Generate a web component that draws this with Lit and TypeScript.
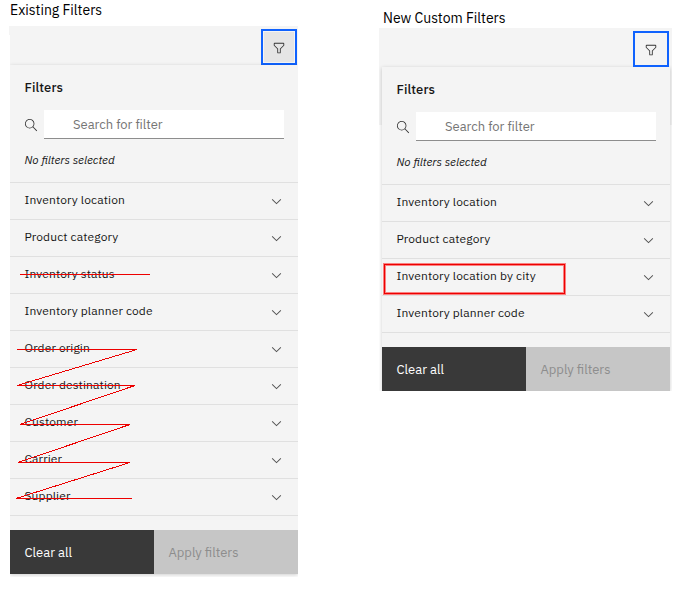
import { LitElement, html, svg, css, nothing } from "lit";
import { customElement, property } from "lit/decorators.js";

const funnel = html`<svg class="funnel" width="16" height="16" viewBox="0 0 32 32" fill="currentColor">
  <path d="M18 28h-4a2 2 0 0 1-2-2v-7.59L4.59 11A2 2 0 0 1 4 9.590V6a2 2 0 0 1 2-2h20a2 2 0 0 1 2 2v3.590a2 2 0 0 1-.590 1.410L20 18.410V26a2 2 0 0 1-2 2ZM6 6v3.590l8 8V26h4v-8.410l8-8V6Z" />
</svg>`;
const lens = html`<svg class="lens" width="16" height="16" viewBox="0 0 16 16" fill="currentColor">
  <path d="M15 14.300 10.700 10c1.900-2.300 1.600-5.800-.7-7.700S4.200.7 2.300 3 .7 8.800 3 10.700c2 1.700 5 1.700 7 0l4.300 4.300.7-.7zM2 6.500C2 4 4 2 6.500 2S11 4 11 6.500 9 11 6.500 11 2 9 2 6.500z" />
</svg>`;
const chevron = html`<svg class="chevron" width="16" height="16" viewBox="0 0 16 16" fill="currentColor">
  <path d="M8 11 3 6l.7-.7L8 9.600l4.300-4.300.7.7z" />
</svg>`;

interface Row { label: string; marked?: boolean; }

@customElement("filter-panel")
export class FilterPanel extends LitElement {
  @property({ attribute: false }) rows: Row[] = [];

  static styles = css`
    :host { display: block; width: 288px; background: #f4f4f4; color: #161616; font-family: "IBM Plex Sans", Roboto, sans-serif; }
    .title { height: 45px; padding: 0 14.500px; box-sizing: border-box; font-size: 13px; font-weight: 500; line-height: 45px; letter-spacing: 0.100px; }
    .search { display: flex; align-items: center; height: 29px; padding: 0 14px 0 13.500px; }
    .lens { flex: none; width: 14px; height: 14px; margin-right: 6.500px; color: #333; }
    .field { flex: 1; height: 29px; box-sizing: border-box; padding-left: 29px; border-bottom: 1px solid #8d8d8d; background: #fff; color: #757575; font-size: 13px; line-height: 29px; letter-spacing: -0.020px; }
    .empty { height: 43px; padding-left: 14.500px; font-size: 11.500px; font-style: italic; line-height: 41px; }
    .row { position: relative; display: flex; align-items: center; justify-content: space-between; height: 36px; padding: 0 14px 0 14.500px; border-top: 1px solid #e0e0e0; font-size: 12px; letter-spacing: 0.130px; }
    .row span { padding-bottom: 4px; }
    .chevron { width: 15px; height: 15px; color: #525252; }
    .end { height: 14px; border-top: 1px solid #e0e0e0; }
    .actions { display: grid; grid-template-columns: 1fr 1fr; height: 44px; font-size: 13px; line-height: 45px; }
    .actions div { height: 44px; padding-left: 14.500px; overflow: hidden; }
    .clear { background: #393939; color: #fff; }
    .apply { background: #c6c6c6; color: #8d8d8d; }
    .mark { position: absolute; left: 1px; top: 4px; box-sizing: border-box; width: 183px; height: 32px; border: 1px solid #f98080; box-shadow: inset 0 0 0 1px #ed0000, inset 0 0 0 2px #f98080; }
  `;

  render() {
    return html`
      <div class="title">Filters</div>
      <div class="search">${lens}<div class="field">Search for filter</div></div>
      <div class="empty">No filters selected</div>
      ${this.rows.map((r) => html`<div class="row"><span>${r.label}</span>${chevron}${r.marked ? html`<i class="mark"></i>` : nothing}</div>`)}
      <div class="end"></div>
      <div class="actions"><div class="clear">Clear all</div><div class="apply">Apply filters</div></div>
    `;
  }
}

const strokes = [
  "20,274 150,274",
  "17,349 137,349 17,385 135,385 20,424 130,424 18,462 130,462 16,498 132,498",
];

@customElement("app-root")
export class AppRoot extends LitElement {
  static styles = css`
    :host { display: flex; position: relative; height: 590px; overflow: hidden; background: #fff; color: #000; font-family: "IBM Plex Sans", Roboto, sans-serif; }
    .before { width: 289px; margin-left: 9px; }
    .after { width: 293px; margin-left: 81px; }
    .heading { height: 26px; box-sizing: border-box; padding-left: 1px; font-size: 14px; line-height: 20px; white-space: nowrap; }
    .after .heading { height: 28px; padding-left: 4px; line-height: 36px; letter-spacing: -0.010px; }
    .bar { display: flex; justify-content: flex-end; height: 39px; padding: 3px 1px 0 0; box-sizing: border-box; background: #f4f4f4; }
    .before .bar { clip-path: polygon(0 0, 100% 0, 100% 100%, 1px 100%, 1px 9px, 0 9px); }
    .after .bar { padding-right: 3px; }
    .toggle { position: relative; z-index: 1; display: grid; place-items: center; width: 36px; height: 36px; box-sizing: border-box; border: 2px solid #0f62fe; box-shadow: inset 0 0 0 1px #f4f4f4; color: #333; background: #e5e5e5; }
    .after .toggle { background: #f4f4f4; }
    .funnel { width: 14px; height: 14px; padding-top: 1px; }
    .before .clip { padding: 0 0 3px; margin-left: 1px; clip-path: inset(-3px 0 0 0); }
    .after .clip { padding: 0 2px 0 3px; background: linear-gradient(#f4f4f4 58px, #fff 58px); clip-path: inset(-3px 0 0 0); }
    filter-panel { box-shadow: 0 1px 4px rgba(0, 0, 0, 0.200); }
    .pen { position: absolute; left: 0; top: 0; fill: none; stroke: #ed0000; stroke-width: 1; shape-rendering: crispEdges; }
  `;

  render() {
    const before = ["Inventory location", "Product category", "Inventory status", "Inventory planner code", "Order origin", "Order destination", "Customer", "Carrier", "Supplier"].map((label) => ({ label }));
    const after: Row[] = [{ label: "Inventory location" }, { label: "Product category" }, { label: "Inventory location by city", marked: true }, { label: "Inventory planner code" }];
    return html`
      <section class="before">
        <div class="heading">Existing Filters</div>
        <div class="bar"><div class="toggle">${funnel}</div></div>
        <div class="clip"><filter-panel .rows=${before}></filter-panel></div>
      </section>
      <section class="after">
        <div class="heading">New Custom Filters</div>
        <div class="bar"><div class="toggle">${funnel}</div></div>
        <div class="clip"><filter-panel .rows=${after}></filter-panel></div>
      </section>
      <svg class="pen" width="681" height="590" viewBox="0 -0.500 681 590">${strokes.map((p) => svg`<polyline points=${p} />`)}</svg>
    `;
  }
}
